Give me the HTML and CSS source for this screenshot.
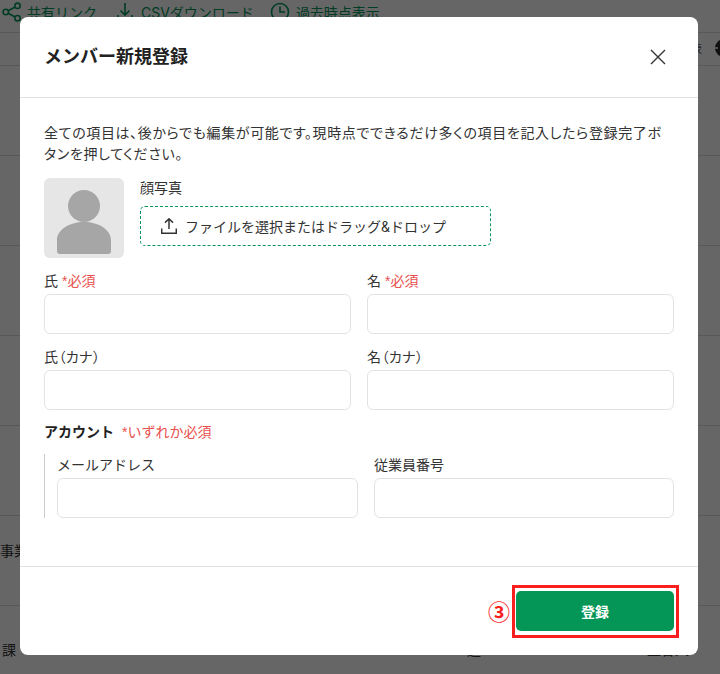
FILE: index.html
```html
<!DOCTYPE html>
<html lang="ja">
<head>
<meta charset="utf-8">
<title>メンバー新規登録</title>
<link rel="stylesheet" href="styles.css">
</head>
<body>
<div class="page">
  <div class="toolbar">
    <span class="tool tool-share">
      <svg class="tool-icon" viewBox="0 0 20 20" width="20" height="20"><circle cx="15.500" cy="3.800" r="2.700"/><circle cx="3.800" cy="10" r="2.700"/><circle cx="15.500" cy="16.200" r="2.700"/><path d="M6.200 8.800 13.100 5M6.200 11.200l6.900 3.800"/></svg>
      共有リンク
    </span>
    <span class="tool tool-csv">
      <svg class="tool-icon" viewBox="0 0 20 20" width="20" height="20"><path d="M10 1v12M5.500 8.500 10 13l4.500-4.500M3 13v3h14v-3"/></svg>
      CSVダウンロード
    </span>
    <span class="tool tool-past">
      <svg class="tool-icon" viewBox="0 0 20 20" width="20" height="20"><circle cx="10" cy="10" r="8.500"/><path d="M10 4.500V10h5"/></svg>
      過去時点表示
    </span>
  </div>
  <div class="table-head"></div>
  <div class="row"></div>
  <div class="row"></div>
  <div class="row"></div>
  <div class="row"></div>
  <div class="row"></div>
  <div class="row row-text">事業</div>
  <div class="row row-last"><span>課</span><span class="cell-mid">一進</span><span class="cell-end">監督人</span></div>
</div>

<div class="overlay"></div>
<span class="head-extra">表</span>
<svg class="head-globe" viewBox="0 0 20 20" width="20" height="20"><circle cx="10" cy="10" r="9"/><path class="globe-line" d="M0 10h4"/></svg>

<section class="modal">
  <header class="modal-head">
    <h1 class="modal-title">メンバー新規登録</h1>
    <svg class="close" viewBox="0 0 16 16" width="16" height="16"><path d="M1 1l14 14M15 1 1 15"/></svg>
  </header>
  <div class="modal-body">
    <p class="lead">全ての項目は、後からでも編集が可能です。現時点でできるだけ多くの項目を記入したら登録完了ボタンを押してください。</p>
    <div class="photo-row">
      <div class="avatar">
        <svg viewBox="0 0 80 80" width="80" height="80"><circle cx="40" cy="28" r="16"/><path d="M13 76V62c0-10 12-18 27-18s27 8 27 18v11a3 3 0 0 1-3 3H16a3 3 0 0 1-3-3z"/></svg>
      </div>
      <div class="photo-field">
        <div class="label">顔写真</div>
        <div class="drop">
          <svg class="upload" viewBox="0 0 16 16" width="16" height="16"><path d="M8 11V1M4 4.600 8 .8l4 3.800M.7 10.500v4.800h14.600v-4.800"/></svg>
          <span>ファイルを選択またはドラッグ&amp;ドロップ</span>
        </div>
      </div>
    </div>
    <div class="grid-two">
      <div class="field"><div class="label">氏 <span class="req">*必須</span></div><div class="input"></div></div>
      <div class="field"><div class="label">名 <span class="req">*必須</span></div><div class="input"></div></div>
      <div class="field"><div class="label label-kana">氏（カナ）</div><div class="input"></div></div>
      <div class="field"><div class="label label-kana">名（カナ）</div><div class="input"></div></div>
    </div>
    <div class="account-head"><strong>アカウント</strong><span class="req">*いずれか必須</span></div>
    <div class="account-group">
      <div class="field"><div class="label">メールアドレス</div><div class="input"></div></div>
      <div class="field"><div class="label">従業員番号</div><div class="input"></div></div>
    </div>
  </div>
  <footer class="modal-foot">
    <span class="step">③</span>
    <div class="highlight"><button class="submit" type="button">登録</button></div>
  </footer>
</section>
</body>
</html>
```

FILE: styles.css
```css
* { box-sizing: border-box; }
html, body { margin: 0; height: 674px; overflow: hidden; }
body {
  position: relative;
  width: 720px;
  background: #fff;
  font-family: "Inter", "Noto Sans CJK JP", sans-serif;
  color: #333;
}
.page { display: flex; flex-direction: column; height: 674px; overflow: hidden; }
.toolbar { height: 32px; padding-bottom: 8px; display: flex; align-items: center; font-size: 14px; color: #03965a; flex: none; }
.tool { display: inline-flex; align-items: center; gap: 5px; white-space: nowrap; }
.tool-share { margin-left: 2px; }
.tool-csv { margin-left: 18px; gap: 6px; }
.tool-past { margin-left: 16px; gap: 6px; }
.tool-icon { fill: none; stroke: #03965a; stroke-width: 1.6; }
.table-head { height: 34px; flex: none; border-top: 1px solid #ddd; border-bottom: 1px solid #ddd; }
.row { height: 90px; flex: none; border-bottom: 1px solid #ddd; font-size: 14px; display: flex; align-items: center; }
.row-text { padding-bottom: 22px; }
.row-last { padding: 0 0 4px 2px; border-bottom: 0; }
.cell-mid { margin-left: 437px; }
.cell-end { margin-left: 166px; }
.overlay { position: absolute; inset: 0; background: rgba(0, 0, 0, .6); }
.head-extra { position: absolute; left: 691px; top: 40px; font-size: 11px; color: #222; }
.head-globe { position: absolute; left: 714px; top: 38px; fill: #111; }
.globe-line { stroke: #666; stroke-width: 1.500; }

.modal {
  position: absolute;
  left: 20px; top: 17px;
  width: 678px; height: 638px;
  background: #fff;
  border-radius: 8px;
  display: flex; flex-direction: column;
}
.modal-head {
  height: 81px; flex: none;
  display: flex; align-items: center; justify-content: space-between;
  padding: 0 32px 0 24px;
  border-bottom: 1px solid #e3e3e6;
}
.modal-title { margin: 0; font-size: 18px; font-weight: 700; color: #222; line-height: 1; }
.close { fill: none; stroke: #333; stroke-width: 1.4; }
.modal-body { flex: 1; padding: 24px 24px 0; }
.lead { margin: 0 0 14px; font-size: 14px; line-height: 21px; color: #333; font-feature-settings: "palt"; letter-spacing: .64px; }
.photo-row { display: flex; gap: 16px; }
.avatar { width: 80px; height: 80px; background: #e6e6e6; border-radius: 6px; flex: none; }
.avatar svg { display: block; fill: #a6a6a6; }
.photo-field { width: 351px; }
.label { font-size: 14px; line-height: 20px; color: #333; }
.label-kana { font-feature-settings: "palt"; letter-spacing: .4px; }
.photo-field .label { margin-bottom: 8px; }
.drop {
  height: 40px; border: 1px dashed #03965a; border-radius: 5px;
  display: flex; align-items: center; gap: 8px; padding-left: 20px;
  font-size: 14px; color: #333;
}
.upload { fill: none; stroke: #333; stroke-width: 1.5; }
.grid-two { display: grid; grid-template-columns: 307px 307px; column-gap: 16px; row-gap: 13px; margin-top: 13px; }
.req { color: #e8504e; font-family: "Liberation Sans", "Noto Sans CJK JP", sans-serif; }
.input { height: 40px; border: 1px solid #e3e3e6; border-radius: 6px; margin-top: 3px; background: #fff; }
.account-head { margin-top: 12px; font-size: 14px; line-height: 20px; display: flex; gap: 8px; }
.account-head strong { color: #222; }
.account-group {
  margin-top: 12px; height: 64px; padding-top: 1px;
  display: grid; grid-template-columns: 301px 300px; column-gap: 16px;
  border-left: 1px solid #ccc; padding-left: 12px;
}
.modal-foot {
  height: 89px; flex: none;
  border-top: 1px solid #e3e3e6;
  display: flex; align-items: center; justify-content: flex-end;
  padding: 1px 19px 0 0; gap: 2px;
}
.step { color: #fa1e1e; font-family: "Noto Sans CJK JP", sans-serif; font-weight: 700; font-size: 22px; line-height: 1; padding-bottom: 4px; }
.highlight { border: 3px solid #fa1e1e; width: 167px; height: 53px; display: flex; padding: 3px 2px 4px 1px; }
.submit {
  flex: 1; border: 0; border-radius: 5px; background: #039656; color: #fff;
  font: 700 14px "Inter", "Noto Sans CJK JP", sans-serif;
}
```
